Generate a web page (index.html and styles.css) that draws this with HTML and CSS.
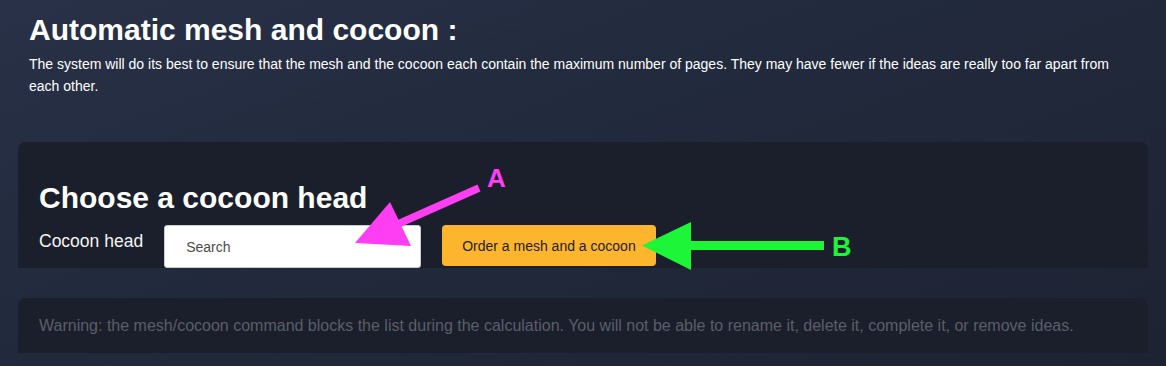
FILE: index.html
```html
<!DOCTYPE html>
<html lang="en">
<head>
<meta charset="utf-8">
<title>Automatic mesh and cocoon</title>
<link rel="stylesheet" href="styles.css">
</head>
<body>
<div class="page">
  <section class="intro">
    <h1 class="title">Automatic mesh and cocoon :</h1>
    <p class="lead">The system will do its best to ensure that the mesh and the cocoon each contain the maximum number of pages. They may have fewer if the ideas are really too far apart from each other.</p>
  </section>
  <section class="card">
    <h2 class="card-title">Choose a cocoon head</h2>
    <div class="row">
      <label class="label" for="head">Cocoon head</label>
      <input class="search" id="head" type="text" placeholder="Search">
      <button class="order" type="button">Order a mesh and a cocoon</button>
    </div>
  </section>
  <section class="warn">
    <p class="warn-text">Warning: the mesh/cocoon command blocks the list during the calculation. You will not be able to rename it, delete it, complete it, or remove ideas.</p>
  </section>
  <svg class="annot" width="1166" height="366" viewBox="0 0 1166 366" aria-hidden="false">
    <line x1="479" y1="188" x2="398" y2="224" stroke="#fd3ef2" stroke-width="7.5"/>
    <polygon points="355,243 390,202 411,246" fill="#fd3ef2"/>
    <text x="487" y="187" class="annot-a">A</text>
    <rect x="689" y="241" width="135" height="9" fill="#1cf538"/>
    <polygon points="642,245.5 691,222 691,270" fill="#1cf538"/>
    <text x="832" y="256" class="annot-b">B</text>
  </svg>
</div>
</body>
</html>
```

FILE: styles.css
```css
html, body {
  margin: 0;
  padding: 0;
}
body {
  width: 1166px;
  height: 366px;
  overflow: hidden;
  background: linear-gradient(160deg, #283147 0%, #222a3d 40%, #1e2333 100%);
  font-family: "Liberation Sans", Arial, Helvetica, sans-serif;
  color: #ffffff;
}
.page {
  position: relative;
  height: 366px;
}
.intro {
  padding: 12px 29px 0;
}
.title {
  margin: 0;
  font-size: 30px;
  line-height: 35px;
  font-weight: 700;
}
.lead {
  margin: 6px 0 0;
  font-size: 14px;
  line-height: 22px;
}
.card {
  margin: 45px 18px 0;
  height: 126px;
  box-sizing: border-box;
  padding: 39px 21px 0;
  background: #1b1f2b;
  border-radius: 8px 8px 0 0;
  overflow: hidden;
}
.card-title {
  margin: 0;
  font-size: 30px;
  line-height: 34px;
  font-weight: 700;
}
.row {
  display: flex;
  align-items: flex-start;
  gap: 21px;
  margin-top: 10px;
}
.label {
  font-size: 17.5px;
  line-height: 20px;
  margin-top: 6px;
  color: #f4f4f4;
}
.search {
  width: 257px;
  height: 43px;
  box-sizing: border-box;
  border: 1px solid #c9cbd0;
  border-radius: 3px;
  background: #ffffff;
  padding: 0 0 0 21px;
  font-family: "Liberation Sans", Arial, sans-serif;
  font-size: 14px;
  color: #333;
  outline: none;
}
.search::placeholder {
  color: #4a4a4a;
}
.order {
  width: 214px;
  height: 41px;
  box-sizing: border-box;
  border: none;
  border-radius: 4px;
  background: #fcb52d;
  color: #1f2128;
  padding: 0 0 0 20px;
  text-align: left;
  font-family: "Liberation Sans", Arial, sans-serif;
  font-size: 14px;
  cursor: pointer;
}
.warn {
  margin: 30px 18px 0;
  height: 55px;
  box-sizing: border-box;
  padding: 0 21px;
  background: #1b1f2b;
  border-radius: 8px 8px 0 0;
  display: flex;
  align-items: center;
}
.warn-text {
  margin: 0;
  font-size: 16px;
  line-height: 18px;
  color: #5a5e69;
}
.annot {
  position: absolute;
  left: 0;
  top: 0;
  pointer-events: none;
}
.annot-a {
  font-family: "Liberation Sans", Arial, sans-serif;
  font-weight: 700;
  font-size: 26px;
  fill: #fd3ef2;
}
.annot-b {
  font-family: "Liberation Sans", Arial, sans-serif;
  font-weight: 700;
  font-size: 27px;
  fill: #1cf538;
}
```
